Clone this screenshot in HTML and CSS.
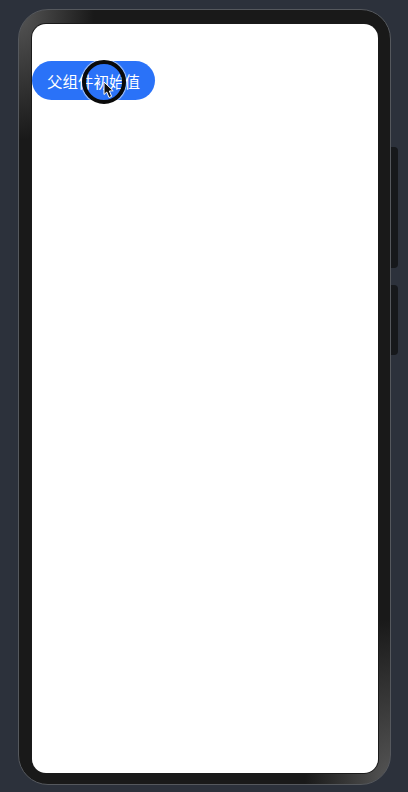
FILE: index.html
```html
<!DOCTYPE html>
<html lang="en">
<head>
    <meta charset="UTF-8">
    <meta name="viewport" content="width=device-width, initial-scale=1.0">
    <title>父组件初始值</title>
    <link rel="stylesheet" href="styles.css">
</head>
<body>
    <div class="device">
        <div class="phone">
            <div class="screen">
                <div class="button-wrap">
                    <button class="button">父组件初始值</button>
                    <!-- Click indicator from the recording -->
                    <div class="click-ring">
                        <svg class="pointer" width="12" height="18" viewBox="0 0 12 18">
                            <path d="M1 1 L1 13.5 L3.8 11 L6 16.5 L8.6 15.4 L6.4 10 L10.2 9.8 Z" fill="#111111" stroke="#ffffff" stroke-width="1"/>
                        </svg>
                    </div>
                </div>
            </div>
        </div>
        <div class="side-keys">
            <div class="key key-long"></div>
            <div class="key key-short"></div>
        </div>
    </div>
</body>
</html>
```

FILE: styles.css
```css
html, body {
    height: 100%;
}
body {
    margin: 0;
    padding: 9px 0 0 18px;
    box-sizing: border-box;
    background: #2c313b;
    font-family: "Liberation Sans", "Noto Sans CJK SC", sans-serif;
    overflow: hidden;
}
.device {
    display: flex;
    align-items: flex-start;
}
.phone {
    width: 373px;
    height: 776px;
    box-sizing: border-box;
    padding: 14px 12px 11px 13px;
    border: 1px solid #55585d;
    border-radius: 30px;
    background:
        radial-gradient(ellipse 85px 165px at 100% 100%, #565656 0%, rgba(86, 86, 86, 0) 100%),
        radial-gradient(ellipse 75px 130px at 0 0, #565656 0%, rgba(86, 86, 86, 0) 100%),
        #191919;
}
.screen {
    height: 100%;
    box-sizing: border-box;
    padding-top: 37px;
    background: #ffffff;
    border-radius: 14px;
    box-shadow: 0 0 0 1px #1a1a1a;
}
.button-wrap {
    position: relative;
    width: 123px;
}
.button {
    display: block;
    width: 123px;
    height: 39px;
    padding: 0;
    border: 0;
    border-radius: 20px;
    background: #2a72f8;
    color: #ffffff;
    font-family: inherit;
    font-size: 15.5px;
}
.click-ring {
    position: absolute;
    left: 50px;
    top: -1px;
    width: 36px;
    height: 36px;
    border: 4px solid #0a0a0a;
    border-radius: 50%;
    box-shadow: 0 0 1px 1px rgba(255, 255, 255, 0.7);
}
.pointer {
    position: absolute;
    left: 17px;
    top: 17px;
}
.side-keys {
    display: flex;
    flex-direction: column;
    gap: 17px;
    padding-top: 138px;
}
.key {
    width: 7px;
    background: #16181b;
    border-radius: 0 4px 4px 0;
}
.key-long {
    height: 121px;
}
.key-short {
    height: 70px;
}
```
